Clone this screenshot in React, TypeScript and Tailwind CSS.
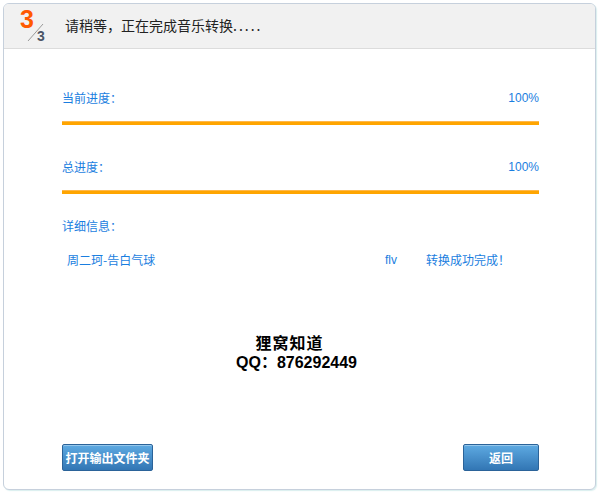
import React from "react";

const blue = "text-[#1a7ee0]";

function StepBadge() {
  return (
    <div className="relative w-[40px] h-[40px] shrink-0">
      <span
        className="absolute left-[16px] top-[1px] text-[25px] leading-[25px] font-bold text-[#ff5a00]"
        style={{ fontFamily: "Arial, 'Liberation Sans', sans-serif" }}
      >
        3
      </span>
      <svg className="absolute left-0 top-0" width="44" height="44" viewBox="0 0 44 44">
        <line x1="24" y1="35" x2="39" y2="18" stroke="#9a9a9a" strokeWidth="1" />
      </svg>
      <span
        className="absolute left-[33px] top-[23px] text-[14px] leading-[14px] font-bold text-[#4b5566]"
        style={{ fontFamily: "Arial, 'Liberation Sans', sans-serif" }}
      >
        3
      </span>
    </div>
  );
}

function ProgressBlock({ label }: { label: string }) {
  return (
    <div>
      <div className={`flex justify-between h-[16px] leading-[16px] text-[12px] ${blue}`}>
        <span>{label}</span>
        <span style={{ fontFamily: "'Liberation Sans', Arial, sans-serif" }}>100%</span>
      </div>
      <div className="mt-[15px] h-[4px] bg-[#ffa500] border-t border-[#ffb84a]" />
    </div>
  );
}

function Btn({ children, w }: { children: React.ReactNode; w: string }) {
  return (
    <button
      className={`${w} h-[27px] rounded-[2px] border border-[#2b6399] bg-gradient-to-b from-[#5eaae2] to-[#3276b4] text-white text-[12px] font-bold leading-[25px] shadow-[inset_0_1px_0_rgba(255,255,255,0.35)]`}
    >
      {children}
    </button>
  );
}

export default function App() {
  return (
    <div
      className="w-[600px] h-[492px] bg-white pt-[3px] pl-[3px]"
      style={{ fontFamily: "'Noto Sans CJK SC', 'Noto Sans', sans-serif" }}
    >
      <div className="w-[593px] h-[487px] rounded-[6px] border border-[#c6d0dc] bg-white flex flex-col overflow-hidden shadow-[1px_1px_1px_rgba(150,210,210,0.35)]">
        <div className="h-[45px] shrink-0 bg-[#f1f1f1] border-b border-[#dcdcdc] flex items-center">
          <StepBadge />
          <span className="ml-[21px] text-[14px] text-[#222] leading-[20px] -mt-[2px]">
            请稍等，正在完成音乐转换<span className="tracking-[2px]">.....</span>
          </span>
        </div>
        <div className="flex-1 flex flex-col pl-[58px] pr-[56px] pt-[41px]">
          <ProgressBlock label="当前进度：" />
          <div className="mt-[34px]">
            <ProgressBlock label="总进度：" />
          </div>
          <div className={`mt-[24px] h-[16px] leading-[16px] text-[12px] ${blue}`}>详细信息：</div>
          <div className={`mt-[18px] h-[16px] leading-[16px] text-[12px] ${blue} flex`}>
            <span className="ml-[5px] w-[318px]">周二珂-告白气球</span>
            <span className="w-[41px]" style={{ fontFamily: "'Liberation Sans', Arial, sans-serif" }}>flv</span>
            <span>转换成功完成！</span>
          </div>
          <div className="mt-[64px] text-center font-bold text-black text-[16px] leading-[20px] tracking-[1px] pr-[22px]">
            狸窝知道
          </div>
          <div
            className="text-center font-bold text-black text-[16px] leading-[21px] pr-[8px]"
            style={{ fontFamily: "Arial, 'Liberation Sans', 'Noto Sans CJK SC', sans-serif" }}
          >
            QQ：876292449
          </div>
          <div className="mt-auto mb-[18px] flex justify-between">
            <Btn w="w-[91px]">打开输出文件夹</Btn>
            <Btn w="w-[76px]">返回</Btn>
          </div>
        </div>
      </div>
    </div>
  );
}
